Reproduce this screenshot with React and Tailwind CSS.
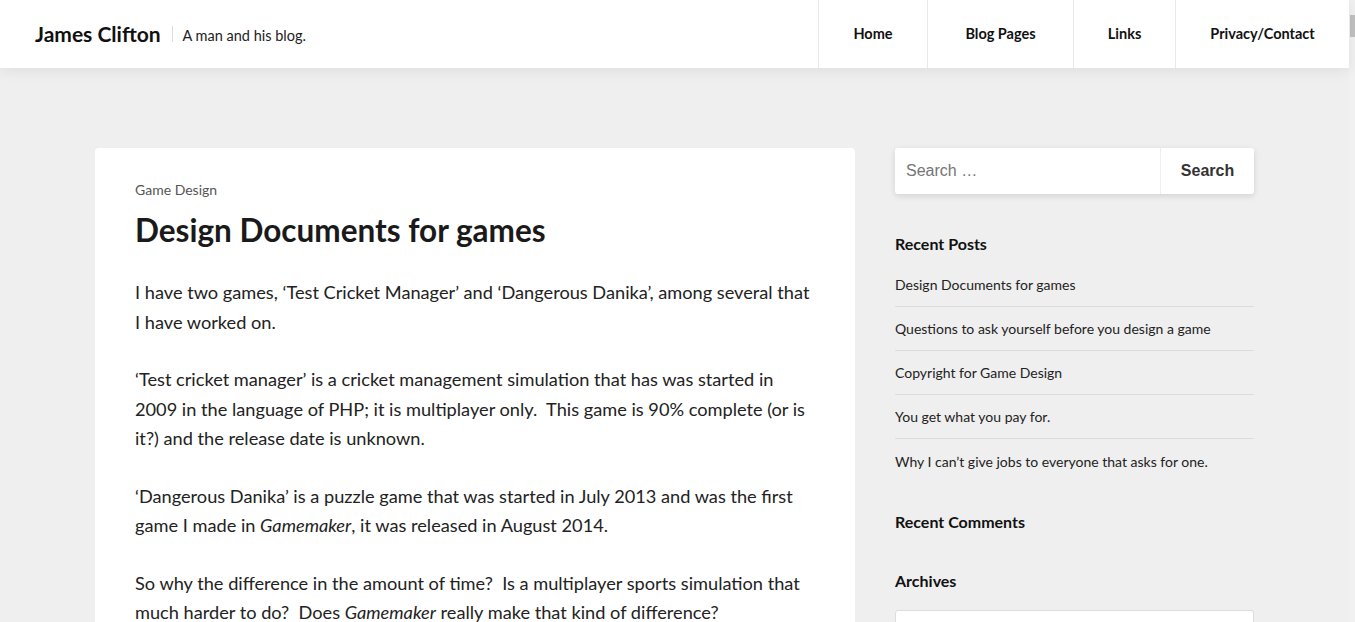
import React from "react";

const font = { fontFamily: "'Segoe UI', Lato, 'Noto Sans', sans-serif" };

const navItems = [
  { label: "Home", w: "w-[109px]" },
  { label: "Blog Pages", w: "w-[146px]" },
  { label: "Links", w: "w-[102px]" },
  { label: "Privacy/Contact", w: "w-[174px]" },
];

const recent = [
  "Design Documents for games",
  "Questions to ask yourself before you design a game",
  "Copyright for Game Design",
  "You get what you pay for.",
  "Why I can\u2019t give jobs to everyone that asks for one.",
];

export default function App() {
  return (
    <div className="flex h-[622px] w-[1355px] overflow-hidden bg-[#efefef]" style={font}>
      <div className="flex w-[1349px] flex-col">
        <header className="relative z-10 flex h-[68px] shrink-0 items-stretch justify-between bg-white shadow-[0_2px_14px_rgba(0,0,0,0.08)]">
          <div className="flex items-center pl-[35px]">
            <span className="text-[21px] font-bold text-[#111]">James Clifton</span>
            <span className="mx-[10px] ml-[11px] h-[16px] w-px bg-[#ddd]" />
            <span className="mt-[4px] text-[14.5px] text-[#222]">A man and his blog.</span>
          </div>
          <nav className="flex">
            {navItems.map((n) => (
              <a
                key={n.label}
                className={`flex ${n.w} items-center justify-center border-l border-[#e8e8e8] text-[14.5px] font-bold text-[#111]`}
              >
                {n.label}
              </a>
            ))}
          </nav>
        </header>

        <div className="flex gap-[40px] px-[95px] pt-[80px]">
          <article className="w-[760px] shrink-0 rounded-[4px] bg-white px-[40px] pt-[34px] pb-10">
            <div className="text-[14px] leading-[16px] text-[#555]">Game Design</div>
            <h1 className="mt-[12px] text-[31.5px] font-bold leading-[40px] text-[#1a1a1a]">
              Design Documents for games
            </h1>
            <div className="mt-[28px] space-y-[28px] whitespace-nowrap text-[18.2px] leading-[29.5px] text-[#222]">
              <p>
                I have two games, ‘Test Cricket Manager’ and ‘Dangerous Danika’, among several that
                <br />
                I have worked on.
              </p>
              <p>
                ‘Test cricket manager’ is a cricket management simulation that has was started in
                <br />
                2009 in the language of PHP; it is multiplayer only.&nbsp; This game is 90% complete (or is
                <br />
                it?) and the release date is unknown.
              </p>
              <p>
                ‘Dangerous Danika’ is a puzzle game that was started in July 2013 and was the first
                <br />
                game I made in <em>Gamemaker</em>, it was released in August 2014.
              </p>
              <p>
                So why the difference in the amount of time?&nbsp; Is a multiplayer sports simulation that
                <br />
                much harder to do?&nbsp; Does <em>Gamemaker</em> really make that kind of difference?
              </p>
            </div>
          </article>

          <aside className="w-[359px] shrink-0">
            <div
              className="flex h-[46px] rounded-[3px] bg-white shadow-[0_2px_6px_rgba(0,0,0,0.12)]"
              style={{ fontFamily: "'Liberation Sans', Arial, sans-serif" }}
            >
              <div className="flex flex-1 items-center border-r border-[#eee] pl-[11px] text-[16px] text-[#757575]">
                Search …
              </div>
              <div className="flex w-[93px] items-center justify-center text-[16px] font-bold text-[#333]">
                Search
              </div>
            </div>

            <h2 className="mt-[40px] text-[16px] font-bold leading-[20px] text-[#111]">Recent Posts</h2>
            <ul className="mt-[9px]">
              {recent.map((r, i) => (
                <li
                  key={r}
                  className={`flex h-[44px] items-center text-[14px] text-[#222] ${
                    i < recent.length - 1 ? "border-b border-[#dcdcdc]" : ""
                  }`}
                >
                  {r}
                </li>
              ))}
            </ul>

            <h2 className="mt-[29px] text-[16px] font-bold leading-[20px] text-[#111]">Recent Comments</h2>
            <h2 className="mt-[39px] text-[16px] font-bold leading-[20px] text-[#111]">Archives</h2>
            <div className="mt-[19px] h-[40px] rounded-[3px] border border-[#ddd] bg-white" />
          </aside>
        </div>
      </div>
      <div className="relative w-[6px] bg-[#f1f1f1]">
        <div className="absolute left-[1px] top-[15px] h-[22px] w-[5px] bg-[#c1c1c1]" />
      </div>
    </div>
  );
}
